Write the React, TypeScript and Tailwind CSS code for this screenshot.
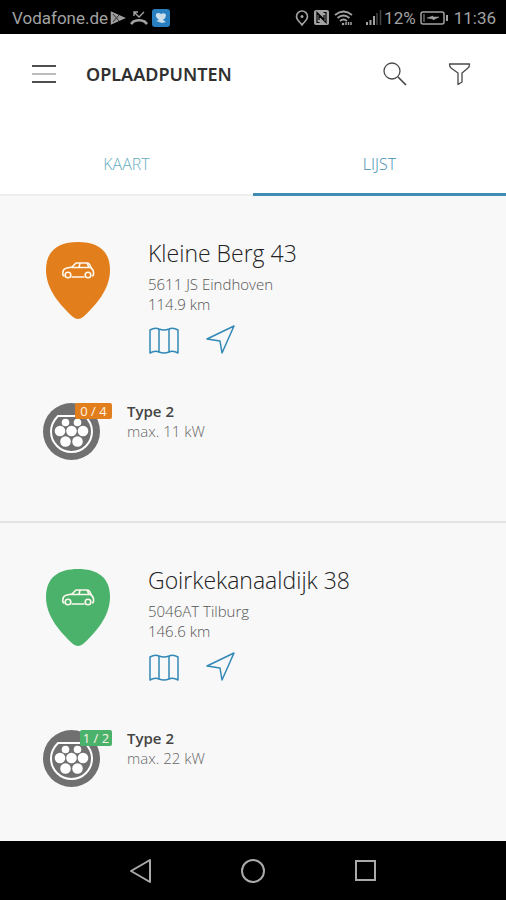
import React from "react";

type Station = {
  name: string;
  address: string;
  distance: string;
  available: string;
  power: string;
  pinClass: string;
  badgeClass: string;
};

const stations: Station[] = [
  {
    name: "Kleine Berg 43",
    address: "5611 JS Eindhoven",
    distance: "114.9 km",
    available: "0 / 4",
    power: "max. 11 kW",
    pinClass: "text-[#e27e1c]",
    badgeClass: "w-[37px] bg-[#e27e1c]",
  },
  {
    name: "Goirkekanaaldijk 38",
    address: "5046AT Tilburg",
    distance: "146.6 km",
    available: "1 / 2",
    power: "max. 22 kW",
    pinClass: "text-[#4bb26c]",
    badgeClass: "w-8 bg-[#4bb26c]",
  },
];

function StatusBar() {
  return (
    <div className="flex h-[34px] items-center justify-between bg-black pl-3 pr-[10px] font-['Roboto',sans-serif] text-[17px] leading-5 text-[#a2a2a2]">
      <div className="flex items-center pt-[2px]">
        <span>Vodafone.de</span>
        <svg className="ml-[2px] size-4" viewBox="0 0 16 16" fill="none" stroke="currentColor" strokeWidth="1.5">
          <path d="M1.500 2.500 14 8 1.500 13.500Z" fill="#999" />
          <path d="m3 4 6 7M3 12l6-7" stroke="#333" strokeWidth="1" />
        </svg>
        <svg className="ml-1 h-4 w-[18px]" viewBox="0 0 18 16" fill="none" stroke="currentColor">
          <path d="M1 14c4-5 12-5 16 0M1 14l3-3M17 14l-3-3" strokeWidth="2.5" />
          <path d="M4 6V2h4M4 2l5 5 5-5" strokeWidth="1.4" />
        </svg>
        <svg className="ml-1 size-[18px]" viewBox="0 0 18 18">
          <rect x="0" y="0" width="18" height="18" rx="3" fill="#277fc0" />
          <path d="M4 5q2-2 5 0 4-2 5 1 0 3-3 5l3 2-4 1-6-2 3-1Q3 8 4 5" fill="#c8deea" />
        </svg>
      </div>
      <div className="flex items-center pt-[2px]">
        <svg className="h-4 w-[14px]" viewBox="0 0 14 16" fill="none" stroke="currentColor" strokeWidth="1.6">
          <path d="M7 15C5 12 1.500 10 1.500 6.500a5.500 5.500 0 0 1 11 0C12.500 10 9 12 7 15Z" />
          <circle cx="7" cy="6.500" r="1.500" fill="currentColor" stroke="none" />
        </svg>
        <svg className="ml-1 h-4 w-[17px]" viewBox="0 0 17 16" fill="none">
          <rect x="1" y="0" width="15" height="15" rx="2" fill="#a2a2a2" />
          <path d="M6.500 12.500H4V2.500l7 7V5M10.500 2.500H13v10l-7-7V10" stroke="#000" strokeWidth="1.200" />
        </svg>
        <svg className="ml-1 h-4 w-[19px]" viewBox="0 0 19 16" fill="none" stroke="currentColor" strokeWidth="1.700">
          <path d="M1 5q8.500-7 17 0M3.500 8q6-5 12 0M6 11q3.500-3 7 0" />
          <circle cx="9" cy="14" r="1.300" fill="currentColor" stroke="none" />
          <path d="M12 15v-3M14.500 15v-3M17 15v-3" strokeWidth="1.500" />
        </svg>
        <svg className="ml-3 h-4 w-[17px]" viewBox="0 0 17 16" fill="none" stroke="currentColor" strokeWidth="2">
          <path d="M2 15v-3M5.500 15v-5M9 15V6" />
          <path d="M12 15V3M15.500 15V0" stroke="#444" strokeWidth="1.500" />
        </svg>
        <span className="ml-[2px]">12%</span>
        <svg className="ml-1 h-4 w-7" viewBox="0 0 28 16" fill="none" stroke="currentColor" strokeWidth="1.500">
          <rect x="1" y="2" width="23" height="12" rx="2" />
          <path d="M27 5v6" strokeWidth="2" />
          <path d="M4 4v8" stroke="#666" />
          <path d="m7 8 6-2v1h6l-6 3V9Z" fill="currentColor" strokeWidth=".5" />
        </svg>
        <span className="ml-[6px]">11:36</span>
      </div>
    </div>
  );
}

function Header() {
  return (
    <header className="flex h-20 items-center bg-white pl-8 pr-[35px] text-[#303030]">
      <button type="button" aria-label="Menu" className="flex w-6 flex-col gap-[6px]">
        <span className="h-[2px] w-full bg-[#505050]" />
        <span className="h-[2px] w-full bg-[#bdbdbd]" />
        <span className="h-[2px] w-full bg-[#505050]" />
      </button>
      <h1 className="ml-[30px] flex-1 font-['Noto_Sans',sans-serif] text-[18px] font-semibold leading-6">OPLAADPUNTEN</h1>
      <button type="button" aria-label="Zoeken">
        <svg className="size-6" viewBox="0 0 24 24" fill="none" stroke="#484848" strokeWidth="1.300">
          <circle cx="9" cy="9" r="8" />
          <path d="m15 15 8 8" strokeWidth="1.700" />
        </svg>
      </button>
      <button type="button" aria-label="Filter" className="ml-10">
        <svg className="h-6 w-6" viewBox="0 0 24 24" fill="none" stroke="#484848" strokeWidth="1.300" strokeLinejoin="round">
          <path d="M2.500 2h20q0 3-1.500 4l-6 5v9l-4 2.500V11L4 6Q2.500 5 2.500 2Z" />
        </svg>
      </button>
    </header>
  );
}

function Tabs() {
  return (
    <div role="tablist" className="grid h-[82px] grid-cols-2 bg-white font-['Open_Sans',sans-serif] text-base font-light leading-6">
      <button type="button" role="tab" aria-selected="false" className="border-b-2 border-[#eeeeee] pt-5 text-[#65adc0]">
        KAART
      </button>
      <button type="button" role="tab" aria-selected="true" className="border-b-[3px] border-[#418cb2] pt-[21px] text-[#418cb2]">
        LIJST
      </button>
    </div>
  );
}

function Pin({ className }: { className: string }) {
  return (
    <svg className={`mt-[5px] h-[77px] w-16 shrink-0 ${className}`} viewBox="0 0 64 77" aria-hidden="true">
      <path d="M32 0C13 0 0 8 0 28c0 20 15 36 27 47q5 4 10 0c12-11 27-27 27-47C64 8 51 0 32 0Z" fill="currentColor" />
      <g fill="none" stroke="#fff8ed" strokeWidth="1.600" strokeLinejoin="round">
        <path d="M18.500 34Q16 34 17 30q0-3 4-4l5-1 4-4h11q3 0 4 5 3 2 2.500 6 0 2-1.500 2M25.500 35h13M25 25.500h21M34 21l-1 4.500M41 21l2 4.500" />
        <circle cx="22" cy="33" r="2.800" />
        <circle cx="42" cy="33" r="2.800" />
      </g>
    </svg>
  );
}

function Socket() {
  return (
    <svg className="size-[57px]" viewBox="0 0 57 57" aria-hidden="true">
      <circle cx="28.500" cy="28.500" r="28.500" fill="#707070" />
      <path d="M15 13h27q7 7 7 15.500a20.500 20.500 0 0 1-41 0Q8 20 15 13Z" fill="#707070" stroke="#fff" strokeWidth="2" />
      <g fill="#fff">
        <circle cx="22.500" cy="19.500" r="3.800" />
        <circle cx="34.500" cy="19.500" r="3.800" />
        <circle cx="17" cy="28" r="5.300" />
        <circle cx="28.500" cy="28" r="5.300" />
        <circle cx="40" cy="28" r="5.300" />
        <circle cx="22.500" cy="38.500" r="5.300" />
        <circle cx="34.500" cy="38.500" r="5.300" />
      </g>
    </svg>
  );
}

function StationItem({ station }: { station: Station }) {
  return (
    <li className="border-b-2 border-[#e4e4e4] px-[43px] pb-[61px] pt-[41px] last:border-b-0 last:pb-[54px]">
      <div className="flex gap-[38px] pl-[3px]">
        <Pin className={station.pinClass} />
        <div className="min-w-0 flex-1">
          <h2 className="text-[23px] font-light leading-8 text-[#222]">{station.name}</h2>
          <p className="mt-[5px] text-[15px] font-light leading-5 text-[#555]">{station.address}</p>
          <p className="text-[15px] font-light leading-5 text-[#555]">{station.distance}</p>
          <div className="mt-[11px] flex gap-[26px]">
            <button type="button" aria-label="Toon op kaart">
              <svg className="h-[30px] w-8" viewBox="0 0 32 30" fill="none" stroke="#3288b6" strokeWidth="1.500" strokeLinejoin="round">
                <path d="M2 5q5-3 9-1 5 2 10 0 4-2 9 1v23q-5-3-9-1-5 2-10 0-4-2-9 1ZM11 4v23M21 4v23" />
              </svg>
            </button>
            <button type="button" aria-label="Route starten">
              <svg className="size-[30px]" viewBox="0 0 30 30" fill="none" stroke="#3288b6" strokeWidth="1.500" strokeLinejoin="round">
                <path d="M1 14 28 1 16 28 14 16Z" />
              </svg>
            </button>
          </div>
        </div>
      </div>
      <div className="mt-[46px] flex">
        <div className="relative mt-[2px] h-[57px] w-[69px] shrink-0">
          <Socket />
          <span className={`absolute right-0 top-0 h-4 rounded-[2px] text-center text-[13px] font-normal leading-4 text-[#fff5e5] ${station.badgeClass}`}>
            {station.available}
          </span>
        </div>
        <div className="ml-[15px]">
          <h3 className="text-[15px] font-semibold leading-5 text-[#444]">Type 2</h3>
          <p className="text-[15px] font-light leading-5 text-[#666]">{station.power}</p>
        </div>
      </div>
    </li>
  );
}

function NavigationBar() {
  return (
    <nav className="flex h-[59px] items-center justify-center gap-[88px] bg-black text-[#aaa]">
      <button type="button" aria-label="Terug">
        <svg className="size-6" viewBox="0 0 24 24" fill="none" stroke="currentColor" strokeWidth="2" strokeLinejoin="round">
          <path d="M21 1v22L2 12Z" />
        </svg>
      </button>
      <button type="button" aria-label="Startscherm">
        <svg className="size-6" viewBox="0 0 24 24" fill="none" stroke="currentColor" strokeWidth="2">
          <circle cx="12" cy="12" r="11" />
        </svg>
      </button>
      <button type="button" aria-label="Recente apps">
        <svg className="size-6" viewBox="0 0 24 24" fill="none" stroke="currentColor" strokeWidth="2">
          <rect x="3" y="2" width="19" height="19" />
        </svg>
      </button>
    </nav>
  );
}

export default function App() {
  return (
    <div className="flex min-h-screen flex-col bg-[#f8f8f8] font-['Open_Sans',sans-serif]">
      <StatusBar />
      <Header />
      <Tabs />
      <main className="flex-1">
        <ul>
          {stations.map((station) => (
            <StationItem key={station.name} station={station} />
          ))}
        </ul>
      </main>
      <NavigationBar />
    </div>
  );
}
